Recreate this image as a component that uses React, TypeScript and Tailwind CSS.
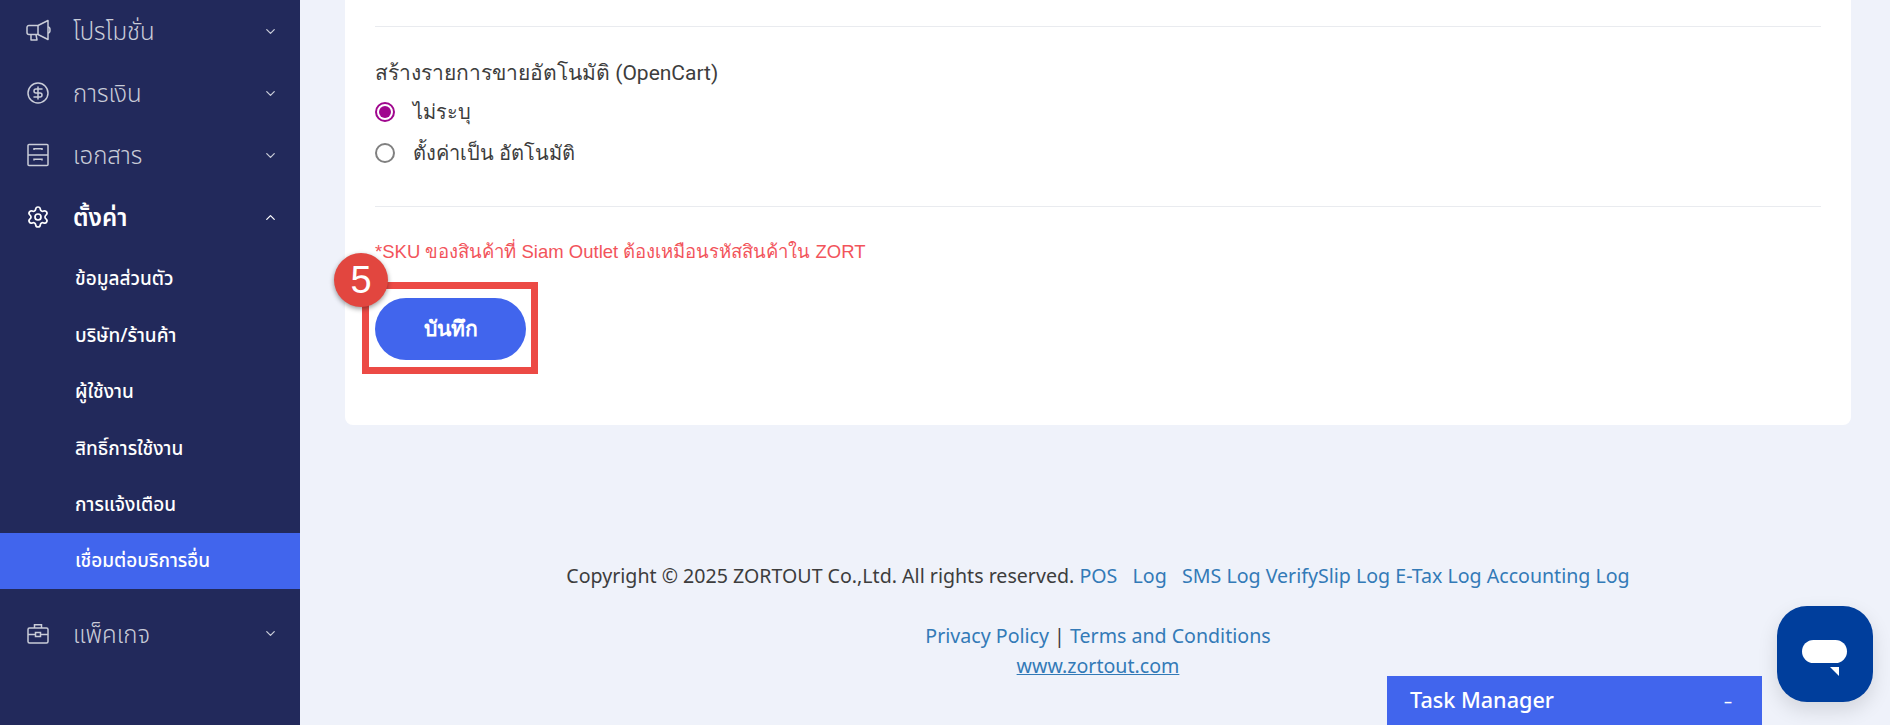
import { ChevronDown, ChevronUp, CircleDollarSign, Settings } from "lucide-react";
import type { ReactNode } from "react";

const FONT = "font-['Noto_Sans','Noto_Sans_Thai','Open_Sans',sans-serif]";

function MegaphoneIcon() {
  return (
    <svg width="25" height="24" viewBox="0 0 25 24" fill="none" stroke="#c9ccd8" strokeWidth="1.5" strokeLinejoin="round">
      <path d="M12 6.500 22 1.500v19l-10-5H3a2 2 0 0 1-2-2V8.500a2 2 0 0 1 2-2z" />
      <path d="M12 6.500v9" />
      <path d="M5 15.500v5.500h6l-1-5.500" />
      <path d="M22 8c1.500 0 2 1.500 2 3s-.5 3-2 3" />
    </svg>
  );
}

function DrawerIcon() {
  return (
    <svg width="24" height="24" viewBox="0 0 24 24" fill="none" stroke="#c9ccd8" strokeWidth="1.5">
      <rect x="2" y="1.500" width="20" height="21" rx="1" />
      <path d="M2 12h20" />
      <path d="M8 7V5.800h8V7M8 17.500v-1.300h8v1.300" />
    </svg>
  );
}

function BriefcaseIcon() {
  return (
    <svg width="24" height="24" viewBox="0 0 24 24" fill="none" stroke="#c9ccd8" strokeWidth="1.5">
      <rect x="2" y="6" width="20" height="15" rx="1.500" />
      <path d="M8.500 6V2.800h7V6" />
      <path d="M2 12.500h7M15 12.500h7" />
      <rect x="9.500" y="10.500" width="5" height="4" />
    </svg>
  );
}

function NavItem({ icon, label, open }: { icon: ReactNode; label: string; open?: boolean }) {
  return (
    <div className="flex h-[62px] items-center pl-[26px] pr-[22px]">
      <span className="flex w-[47px] shrink-0">{icon}</span>
      <span className={open ? "text-[24px] font-semibold text-white" : "text-[24px] font-light text-[#c9ccd8]"}>{label}</span>
      <span className="ml-auto">
        {open ? <ChevronUp size={15} color="#fff" /> : <ChevronDown size={15} color="#c9ccd8" />}
      </span>
    </div>
  );
}

const subItems = ["ข้อมูลส่วนตัว", "บริษัท/ร้านค้า", "ผู้ใช้งาน", "สิทธิ์การใช้งาน", "การแจ้งเตือน", "เชื่อมต่อบริการอื่น"];

function Sidebar() {
  return (
    <aside className="flex h-[725px] w-[300px] shrink-0 flex-col bg-[#22295b]">
      <NavItem icon={<MegaphoneIcon />} label="โปรโมชั่น" />
      <NavItem icon={<CircleDollarSign size={24} color="#c9ccd8" strokeWidth={1.5} />} label="การเงิน" />
      <NavItem icon={<DrawerIcon />} label="เอกสาร" />
      <NavItem icon={<Settings size={24} color="#fff" strokeWidth={1.7} />} label="ตั้งค่า" open />
      <div className="flex flex-col pt-[2px]">
        {subItems.map((s, i) => (
          <div
            key={s}
            className={
              i === 5
                ? "flex h-[56px] items-center bg-[#4165ed] pl-[75px] text-[19px] font-medium text-white"
                : "flex h-[56.500px] items-center pl-[75px] text-[19px] font-medium text-white"
            }
          >
            {s}
          </div>
        ))}
      </div>
      <div className="mt-[14px]">
        <NavItem icon={<BriefcaseIcon />} label="แพ็คเกจ" />
      </div>
    </aside>
  );
}

function Radio({ checked, label }: { checked?: boolean; label: string }) {
  return (
    <div className="flex h-[41px] items-center gap-[18px]">
      {checked ? (
        <span className="flex size-[20px] items-center justify-center rounded-full border-2 border-[#a0078e]">
          <span className="size-[12px] rounded-full bg-[#a0078e]" />
        </span>
      ) : (
        <span className="size-[20px] rounded-full border-2 border-[#808080]" />
      )}
      <span className="text-[20px] leading-[30px] text-[#3d3d3d]">{label}</span>
    </div>
  );
}

export default function App() {
  return (
    <div className={`relative flex h-[725px] w-[1890px] overflow-hidden bg-[#eff2fa] ${FONT}`}>
      <Sidebar />
      <main className="flex min-w-0 flex-1 flex-col pl-[45px] pr-[39px]">
        <section className="h-[425px] rounded-b-lg bg-white px-[30px] pt-[26px] font-['Roboto','Noto_Sans',sans-serif]">
          <div className="h-px bg-[#e9ebef]" />
          <p className="mt-[31px] text-[21px] leading-[30px] text-[#3d3d3d]">สร้างรายการขายอัตโนมัติ (OpenCart)</p>
          <div className="mt-[3px]">
            <Radio checked label="ไม่ระบุ" />
            <Radio label="ตั้งค่าเป็น อัตโนมัติ" />
          </div>
          <div className="mt-[33px] h-px bg-[#e9ebef]" />
          <p className="mt-[32px] font-['Liberation_Sans',sans-serif] text-[18.500px] leading-[26px] text-[#f2545b]">
            *SKU ของสินค้าที่ Siam Outlet ต้องเหมือนรหัสสินค้าใน ZORT
          </p>
          <div className="relative mt-[33px] w-fit">
            <button className="h-[62px] w-[151px] rounded-full bg-[#4165ed] font-['Noto_Sans',sans-serif] text-[21px] font-semibold text-white">บันทึก</button>
            {/* annotation frame + step badge */}
            <div className="absolute -left-[13px] -right-[12px] -top-[16px] -bottom-[14px] border-[7px] border-[#ec4a45]" />
            <div className="absolute -left-[41px] -top-[45px] flex size-[54px] items-center justify-center rounded-full bg-[#e2463f] font-['Liberation_Sans',sans-serif] text-[38px] text-white shadow-[0_2px_5px_rgba(0,0,0,0.4)]">
              5
            </div>
          </div>
        </section>
        <footer className="mt-[136px] flex flex-col items-center text-[19.600px] text-[#3d3d3d]">
          <p className="leading-[30px]">
            Copyright © 2025 ZORTOUT Co.,Ltd. All rights reserved.{" "}
            <span className="text-[#337ab7]">POS &nbsp; Log &nbsp; SMS Log VerifySlip Log E-Tax Log Accounting Log</span>
          </p>
          <p className="mt-[30px] leading-[30px]">
            <span className="text-[#337ab7]">Privacy Policy</span> | <span className="text-[#337ab7]">Terms and Conditions</span>
          </p>
          <p className="leading-[30px] text-[#337ab7] underline">www.zortout.com</p>
        </footer>
      </main>
      {/* floating task manager tab */}
      <div className="absolute bottom-0 left-[1387px] flex h-[49px] w-[375px] items-center justify-between bg-[#4165ed] pl-[23px] pr-[30px] text-[21.600px] font-medium text-white">
        <span>Task Manager</span>
        <span className="text-[16px]">–</span>
      </div>
      {/* chat launcher */}
      <div className="absolute left-[1777px] top-[606px] flex h-[96px] w-[96px] items-center justify-center rounded-[30px] bg-[#003e9c] shadow-[0_8px_20px_rgba(0,0,0,0.12)]">
        <svg className="mt-[8px]" width="46" height="36" viewBox="0 0 46 36" fill="#fff">
          <rect x="0" y="0" width="45" height="23" rx="11.500" />
          <path d="M28 27h9v9z" />
        </svg>
      </div>
    </div>
  );
}
